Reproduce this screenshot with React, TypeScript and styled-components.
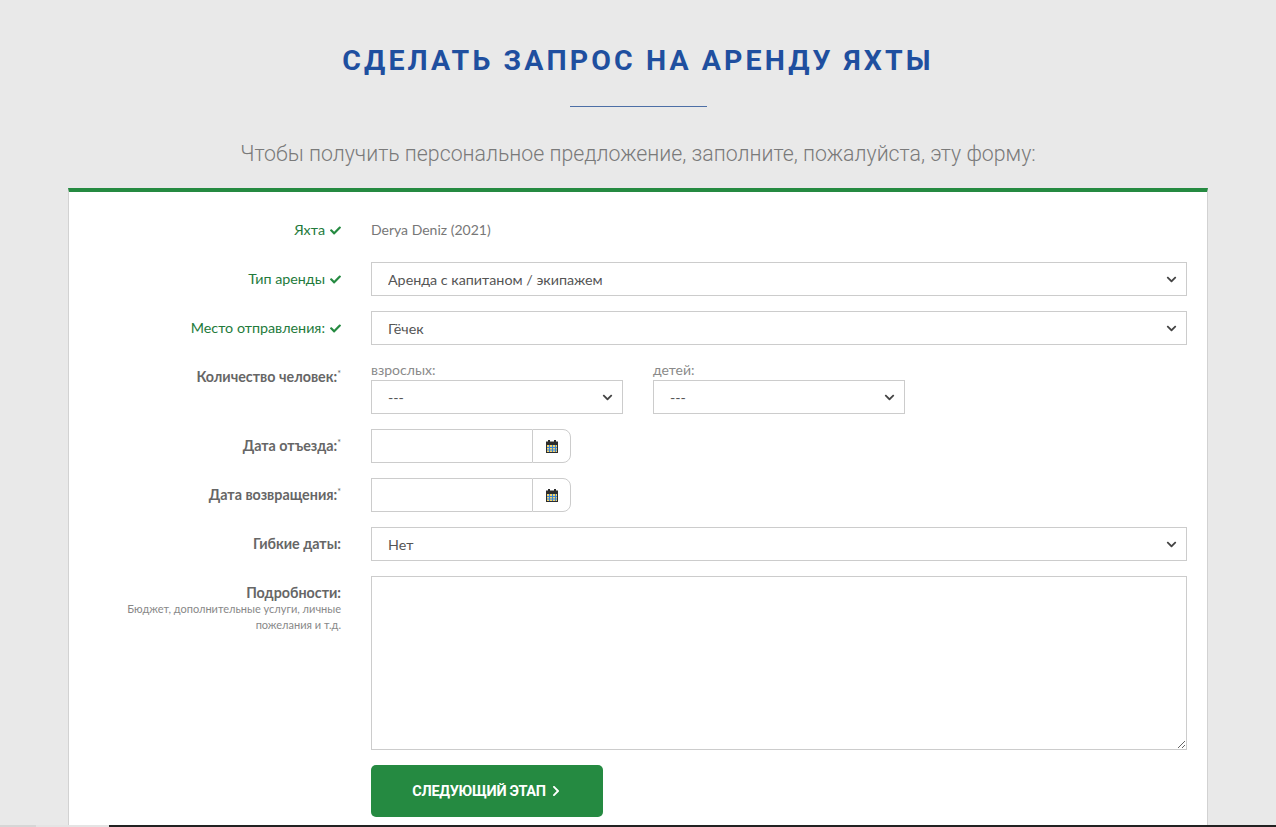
import React from 'react';
import styled, { createGlobalStyle } from 'styled-components';
import { FaCheck, FaChevronDown, FaChevronRight } from 'react-icons/fa';

const GlobalStyle = createGlobalStyle`
  html, body {
    margin: 0;
    padding: 0;
    background: #e9e9e9;
    overflow: hidden;
  }
  * { box-sizing: border-box; }
`;

const Page = styled.div`
  width: 1140px;
  margin: 0 auto;
  padding-top: 43px;
  font-family: Lato, 'Open Sans', sans-serif;
`;

const Title = styled.h1`
  margin: 0;
  text-align: center;
  font-family: Roboto, 'Liberation Sans', sans-serif;
  font-weight: 700;
  font-size: 28.5px;
  line-height: 35px;
  letter-spacing: 3.1px;
  color: #1f4f9f;
`;

const Divider = styled.hr`
  width: 137px;
  height: 1px;
  margin: 28px auto 0;
  border: 0;
  background: #4d6fa6;
`;

const Subtitle = styled.p`
  margin: 33px 0 20px;
  text-align: center;
  font-family: Roboto, 'Liberation Sans', sans-serif;
  font-weight: 300;
  font-size: 21.3px;
  line-height: 28px;
  color: #7a7a7a;
`;

const Card = styled.div`
  background: #fff;
  border-top: 4px solid #258a41;
  border-left: 1px solid #d2d2d2;
  border-right: 1px solid #d2d2d2;
  padding: 21px 20px 40px 0;
  min-height: 660px;
`;

const Row = styled.div`
  display: grid;
  grid-template-columns: 272px 816px;
  column-gap: 30px;
  margin-bottom: 15px;
`;

const Label = styled.div<{ $ok?: boolean }>`
  text-align: right;
  font-size: 14.3px;
  line-height: 34px;
  font-weight: ${p => (p.$ok ? 400 : 700)};
  color: ${p => (p.$ok ? '#237a3b' : '#666')};

  svg {
    color: #258a41;
    margin-left: 5px;
    vertical-align: -1px;
  }
`;

const Req = styled.span`
  display: inline-block;
  font-size: 9px;
  font-weight: 400;
  line-height: 0;
  position: relative;
  top: -5px;
`;

const LabelNote = styled.div`
  font-size: 11px;
  line-height: 16px;
  font-weight: 400;
  color: #888;
  margin-top: -9px;
`;

const Value = styled.div`
  font-size: 14px;
  line-height: 34px;
  color: #777;
`;

const SelectWrap = styled.div<{ $width?: string }>`
  position: relative;
  width: ${p => p.$width || '100%'};

  svg {
    position: absolute;
    right: 10px;
    top: 12px;
    color: #444;
    pointer-events: none;
  }
`;

const Select = styled.select`
  appearance: none;
  display: block;
  width: 100%;
  height: 34px;
  padding: 0 30px 0 16px;
  border: 1px solid #ccc;
  border-radius: 0;
  background: #fff;
  font-family: Lato, 'Open Sans', sans-serif;
  font-size: 14.3px;
  color: #555;
  outline: none;
`;

const Pair = styled.div`
  display: grid;
  grid-template-columns: 252px 252px;
  column-gap: 30px;
`;

const SubLabel = styled.div`
  font-size: 14px;
  line-height: 20px;
  font-weight: 400;
  color: #8a8a8a;
`;

const InputGroup = styled.div`
  display: flex;
  width: 200px;
  height: 34px;
`;

const Input = styled.input`
  width: 161px;
  height: 34px;
  border: 1px solid #ccc;
  border-right: 0;
  padding: 0 12px;
  outline: none;
  font-size: 14px;
`;

const Addon = styled.span`
  width: 39px;
  display: flex;
  align-items: center;
  justify-content: center;
  border: 1px solid #ccc;
  border-radius: 0 8px 8px 0;
  background: #fff;
`;

const TextArea = styled.textarea`
  display: block;
  width: 816px;
  height: 174px;
  border: 1px solid #ccc;
  resize: vertical;
  outline: none;
`;

const Button = styled.button`
  width: 232px;
  height: 52px;
  border: 0;
  border-radius: 5px;
  background: #258a41;
  color: #fff;
  font-family: Roboto, 'Liberation Sans', sans-serif;
  font-weight: 700;
  font-size: 14.5px;
  letter-spacing: -0.3px;
  text-transform: uppercase;
  display: flex;
  align-items: center;
  justify-content: center;
  gap: 4px;
`;

const BottomStrip = styled.div`
  position: fixed;
  left: 0;
  right: 0;
  bottom: 0;
  height: 2px;
  display: grid;
  grid-template-columns: 36px 73px 1fr;

  span:nth-child(1) { background: #d6d6d6; }
  span:nth-child(2) { background: #e4e4e4; }
  span:nth-child(3) { background: #222; }
`;

const CalendarIcon = () => (
  <svg width="12" height="13" viewBox="0 0 12 13">
    <rect x="0.5" y="2" width="11" height="10.5" fill="#f6d36a" stroke="#2c2c2c" />
    <rect x="0" y="2" width="12" height="3" fill="#2c2c2c" />
    <rect x="2" y="0" width="2" height="3" fill="#2c2c2c" />
    <rect x="8" y="0" width="2" height="3" fill="#2c2c2c" />
    <g fill="#3b86d6">
      <rect x="3" y="5" width="1" height="7" />
      <rect x="6" y="5" width="1" height="7" />
      <rect x="9" y="5" width="1" height="7" />
      <rect x="1" y="7" width="10" height="1" />
      <rect x="1" y="9.5" width="10" height="1" />
    </g>
  </svg>
);

const Chevron = () => <FaChevronDown size={11} />;

const App: React.FC = () => (
  <>
    <GlobalStyle />
    <Page>
      <Title>СДЕЛАТЬ ЗАПРОС НА АРЕНДУ ЯХТЫ</Title>
      <Divider />
      <Subtitle>Чтобы получить персональное предложение, заполните, пожалуйста, эту форму:</Subtitle>
      <Card>
        <Row>
          <Label $ok>Яхта<FaCheck size={11} /></Label>
          <Value>Derya Deniz (2021)</Value>
        </Row>
        <Row>
          <Label $ok>Тип аренды<FaCheck size={11} /></Label>
          <SelectWrap>
            <Select defaultValue="crew">
              <option value="crew">Аренда с капитаном / экипажем</option>
            </Select>
            <Chevron />
          </SelectWrap>
        </Row>
        <Row>
          <Label $ok>Место отправления:<FaCheck size={11} /></Label>
          <SelectWrap>
            <Select defaultValue="gocek">
              <option value="gocek">Гёчек</option>
            </Select>
            <Chevron />
          </SelectWrap>
        </Row>
        <Row>
          <Label>Количество человек:<Req>*</Req></Label>
          <Pair>
            <div>
              <SubLabel>взрослых:</SubLabel>
              <SelectWrap>
                <Select><option>---</option></Select>
                <Chevron />
              </SelectWrap>
            </div>
            <div>
              <SubLabel>детей:</SubLabel>
              <SelectWrap>
                <Select><option>---</option></Select>
                <Chevron />
              </SelectWrap>
            </div>
          </Pair>
        </Row>
        <Row>
          <Label>Дата отъезда:<Req>*</Req></Label>
          <InputGroup>
            <Input type="text" />
            <Addon><CalendarIcon /></Addon>
          </InputGroup>
        </Row>
        <Row>
          <Label>Дата возвращения:<Req>*</Req></Label>
          <InputGroup>
            <Input type="text" />
            <Addon><CalendarIcon /></Addon>
          </InputGroup>
        </Row>
        <Row>
          <Label>Гибкие даты:</Label>
          <SelectWrap>
            <Select><option>Нет</option></Select>
            <Chevron />
          </SelectWrap>
        </Row>
        <Row>
          <Label>
            Подробности:
            <LabelNote>
              Бюджет, дополнительные услуги, личные
              <br />
              пожелания и т.д.
            </LabelNote>
          </Label>
          <TextArea />
        </Row>
        <Row>
          <div />
          <Button>
            Следующий этап <FaChevronRight size={12} />
          </Button>
        </Row>
      </Card>
    </Page>
    <BottomStrip>
      <span />
      <span />
      <span />
    </BottomStrip>
  </>
);

export default App;
